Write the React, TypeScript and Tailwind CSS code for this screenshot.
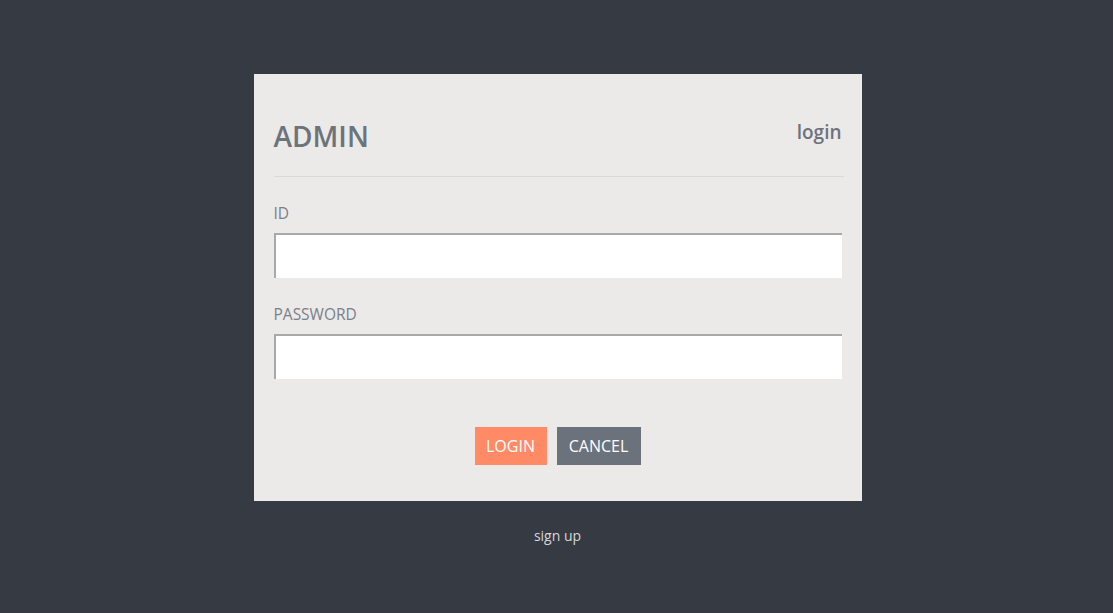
export default function App() {
  return (
    <div className="min-h-[613px] w-full bg-[#363a42] flex flex-col items-center pt-[74px] pl-[2px] font-['Open_Sans',sans-serif]">
      <div className="w-[608px] bg-[#ece9e9] px-5 pt-[36px] pb-[36px]">
        <div className="flex items-start justify-between border-b border-[#dcd9d9] pb-[15px] mr-[-2px]">
          <h1 className="text-[28px] font-semibold text-[#6c737b] leading-[50px] mt-[1px]">ADMIN</h1>
          <span className="text-[19px] font-semibold text-[#6c737b] leading-[28px] mt-[8px] mr-[2px]">login</span>
        </div>
        <div className="mt-[26px]">
          <label className="block text-[15.5px] text-[#7a8087] leading-[20px]">ID</label>
          <input className="mt-[10px] block w-full h-[45px] bg-white border-t-2 border-l-2 border-[#a9a9a9] outline-none" />
        </div>
        <div className="mt-[26px]">
          <label className="block text-[15.5px] text-[#7a8087] leading-[20px]">PASSWORD</label>
          <input type="password" className="mt-[10px] block w-full h-[45px] bg-white border-t-2 border-l-2 border-[#a9a9a9] outline-none" />
        </div>
        <div className="flex justify-center gap-[10px] mt-[48px]">
          <button className="w-[72px] h-[38px] bg-[#ff8a65] text-white text-[16px] leading-none">LOGIN</button>
          <button className="w-[84px] h-[38px] bg-[#6b727b] text-white text-[16px] leading-none">CANCEL</button>
        </div>
      </div>
      <div className="mt-[24px] text-[14px] text-[#d5d7da]">sign up</div>
    </div>
  );
}
